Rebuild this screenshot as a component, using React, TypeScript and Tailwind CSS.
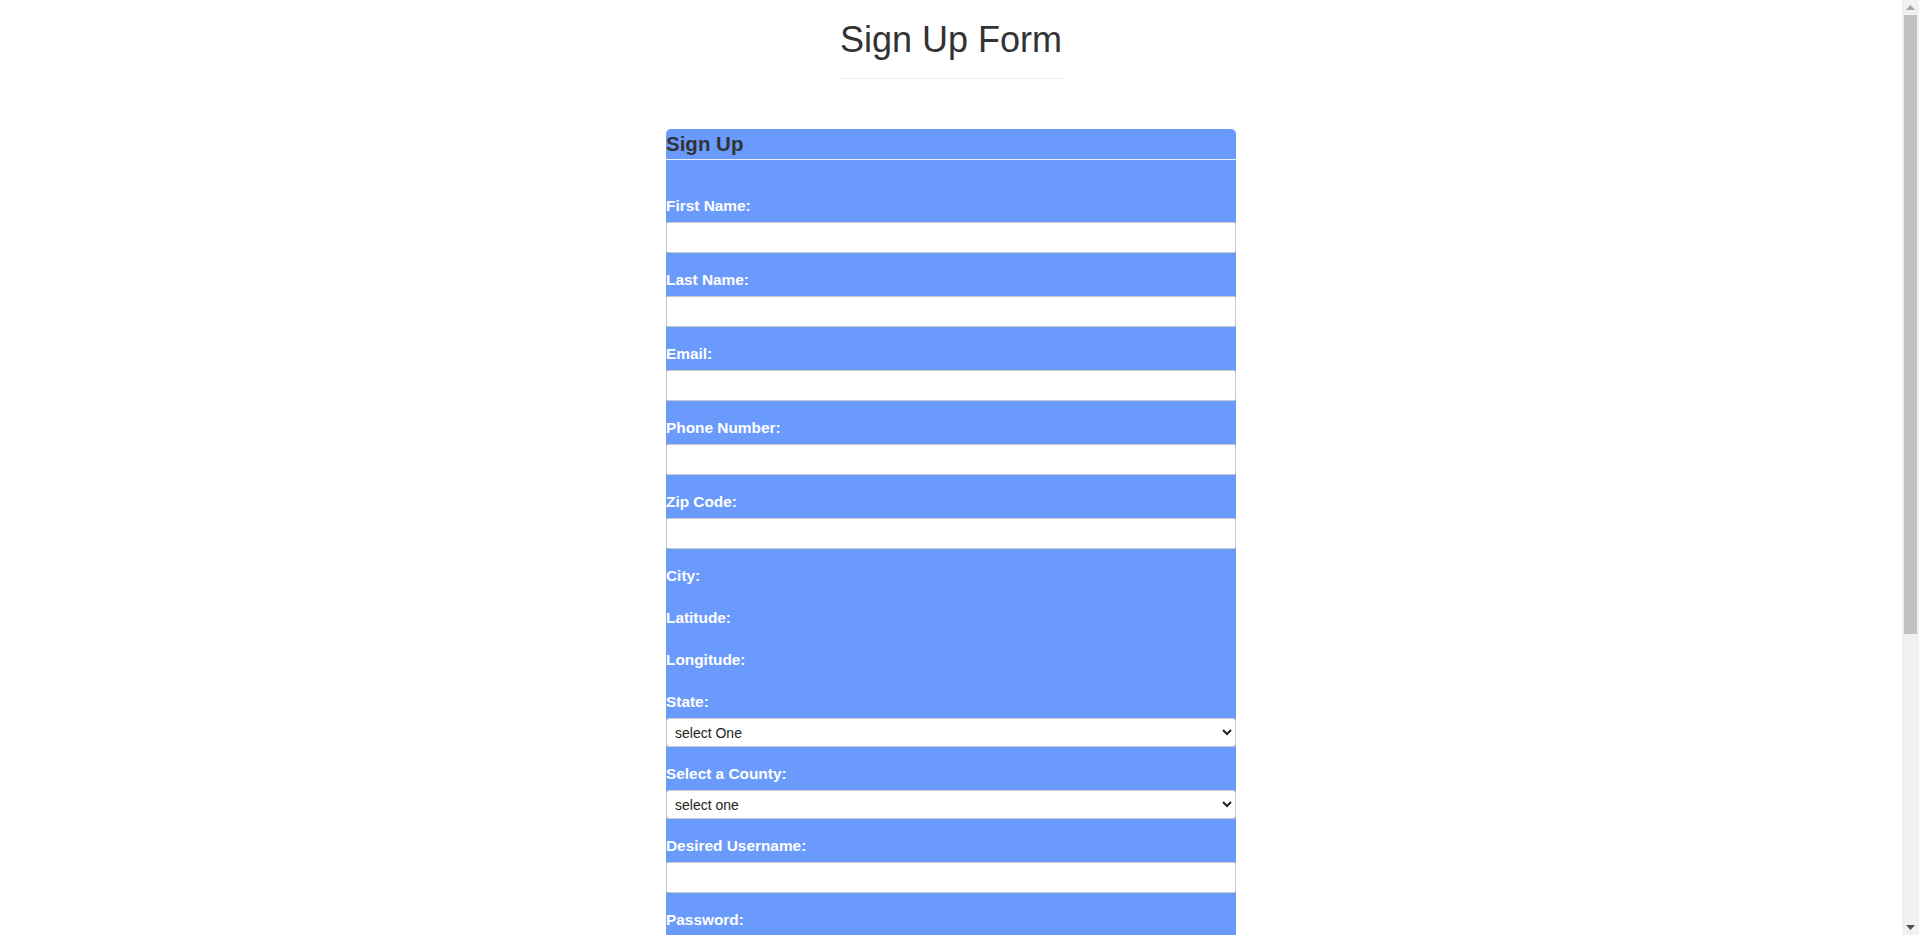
import React from "react";

type Field =
  | { label: string; kind: "input"; type?: string }
  | { label: string; kind: "none" }
  | { label: string; kind: "select"; placeholder: string };

const fields: Field[] = [
  { label: "First Name:", kind: "input" },
  { label: "Last Name:", kind: "input" },
  { label: "Email:", kind: "input", type: "email" },
  { label: "Phone Number:", kind: "input", type: "tel" },
  { label: "Zip Code:", kind: "input" },
  { label: "City:", kind: "none" },
  { label: "Latitude:", kind: "none" },
  { label: "Longitude:", kind: "none" },
  { label: "State:", kind: "select", placeholder: "select One" },
  { label: "Select a County:", kind: "select", placeholder: "select one" },
  { label: "Desired Username:", kind: "input" },
  { label: "Password:", kind: "input", type: "password" },
  { label: "Confirm Password:", kind: "input", type: "password" },
];

function FieldRow({ f }: { f: Field }) {
  if (f.kind === "none") {
    return (
      <div className="mb-[21px] pt-px">
        <label className="block h-5 text-[15.4px] font-bold leading-5 text-white">{f.label}</label>
      </div>
    );
  }
  return (
    <div className="mb-4 pt-px">
      <label className="mb-[6px] block h-5 text-[15.4px] font-bold leading-5 text-white">{f.label}</label>
      {f.kind === "input" ? (
        <input
          type={f.type ?? "text"}
          className="block h-[31px] w-full rounded-[2px] border border-[#c9c9c9] bg-white px-2 text-[14px] text-[#333] outline-none"
        />
      ) : (
        <select
          defaultValue=""
          className="block h-[29px] w-full rounded-[3px] border border-[#c9c9c9] bg-white pl-1 pr-2 text-[14px] text-[#222] outline-none"
        >
          <option value="">{f.placeholder}</option>
        </select>
      )}
    </div>
  );
}

function FakeScrollbar() {
  return (
    <div className="sticky top-0 flex h-screen w-[17px] shrink-0 flex-col items-center bg-[#f1f1f1]">
      <div className="flex h-[15px] w-full items-center justify-center">
        <svg width="9" height="5" viewBox="0 0 9 5">
          <polygon points="4.5,0 9,5 0,5" fill="#a3a3a3" />
        </svg>
      </div>
      <div className="h-[619px] w-[13px] bg-[#c1c1c1]" />
      <div className="flex-1" />
      <div className="flex h-[15px] w-full items-center justify-center">
        <svg width="9" height="5" viewBox="0 0 9 5">
          <polygon points="0,0 9,0 4.5,5" fill="#505050" />
        </svg>
      </div>
    </div>
  );
}

export default function App() {
  return (
    <div
      className="flex min-h-screen bg-white text-[#333]"
      style={{ fontFamily: '"Liberation Sans", Arial, Helvetica, sans-serif' }}
    >
      <main className="min-w-0 flex-1 pb-[249px]">
        <div className="flex justify-center">
          <div className="inline-block">
            <h1 className="mt-[20px] px-[2px] text-center text-[36px] font-normal leading-[40px] text-[#333]">
              Sign Up Form
            </h1>
            <div className="mt-[18px] h-px bg-[#eeeeee]" />
          </div>
        </div>

        <form className="mx-auto mt-[50px] w-[570px] rounded-t-[5px] bg-[#6a9bfc] pb-5">
          <div className="h-[31px] border-b border-[#e9effd]">
            <h3 className="text-[20.5px] font-bold leading-[30px] text-[#333]">Sign Up</h3>
          </div>
          <div className="pt-[35px]">
            {fields.map((f) => (
              <FieldRow key={f.label} f={f} />
            ))}
            <button
              type="button"
              className="h-[34px] rounded-[4px] border border-[#2e6da4] bg-[#337ab7] px-3 text-[14px] text-white"
            >
              Submit
            </button>
          </div>
        </form>
      </main>
      <FakeScrollbar />
    </div>
  );
}
